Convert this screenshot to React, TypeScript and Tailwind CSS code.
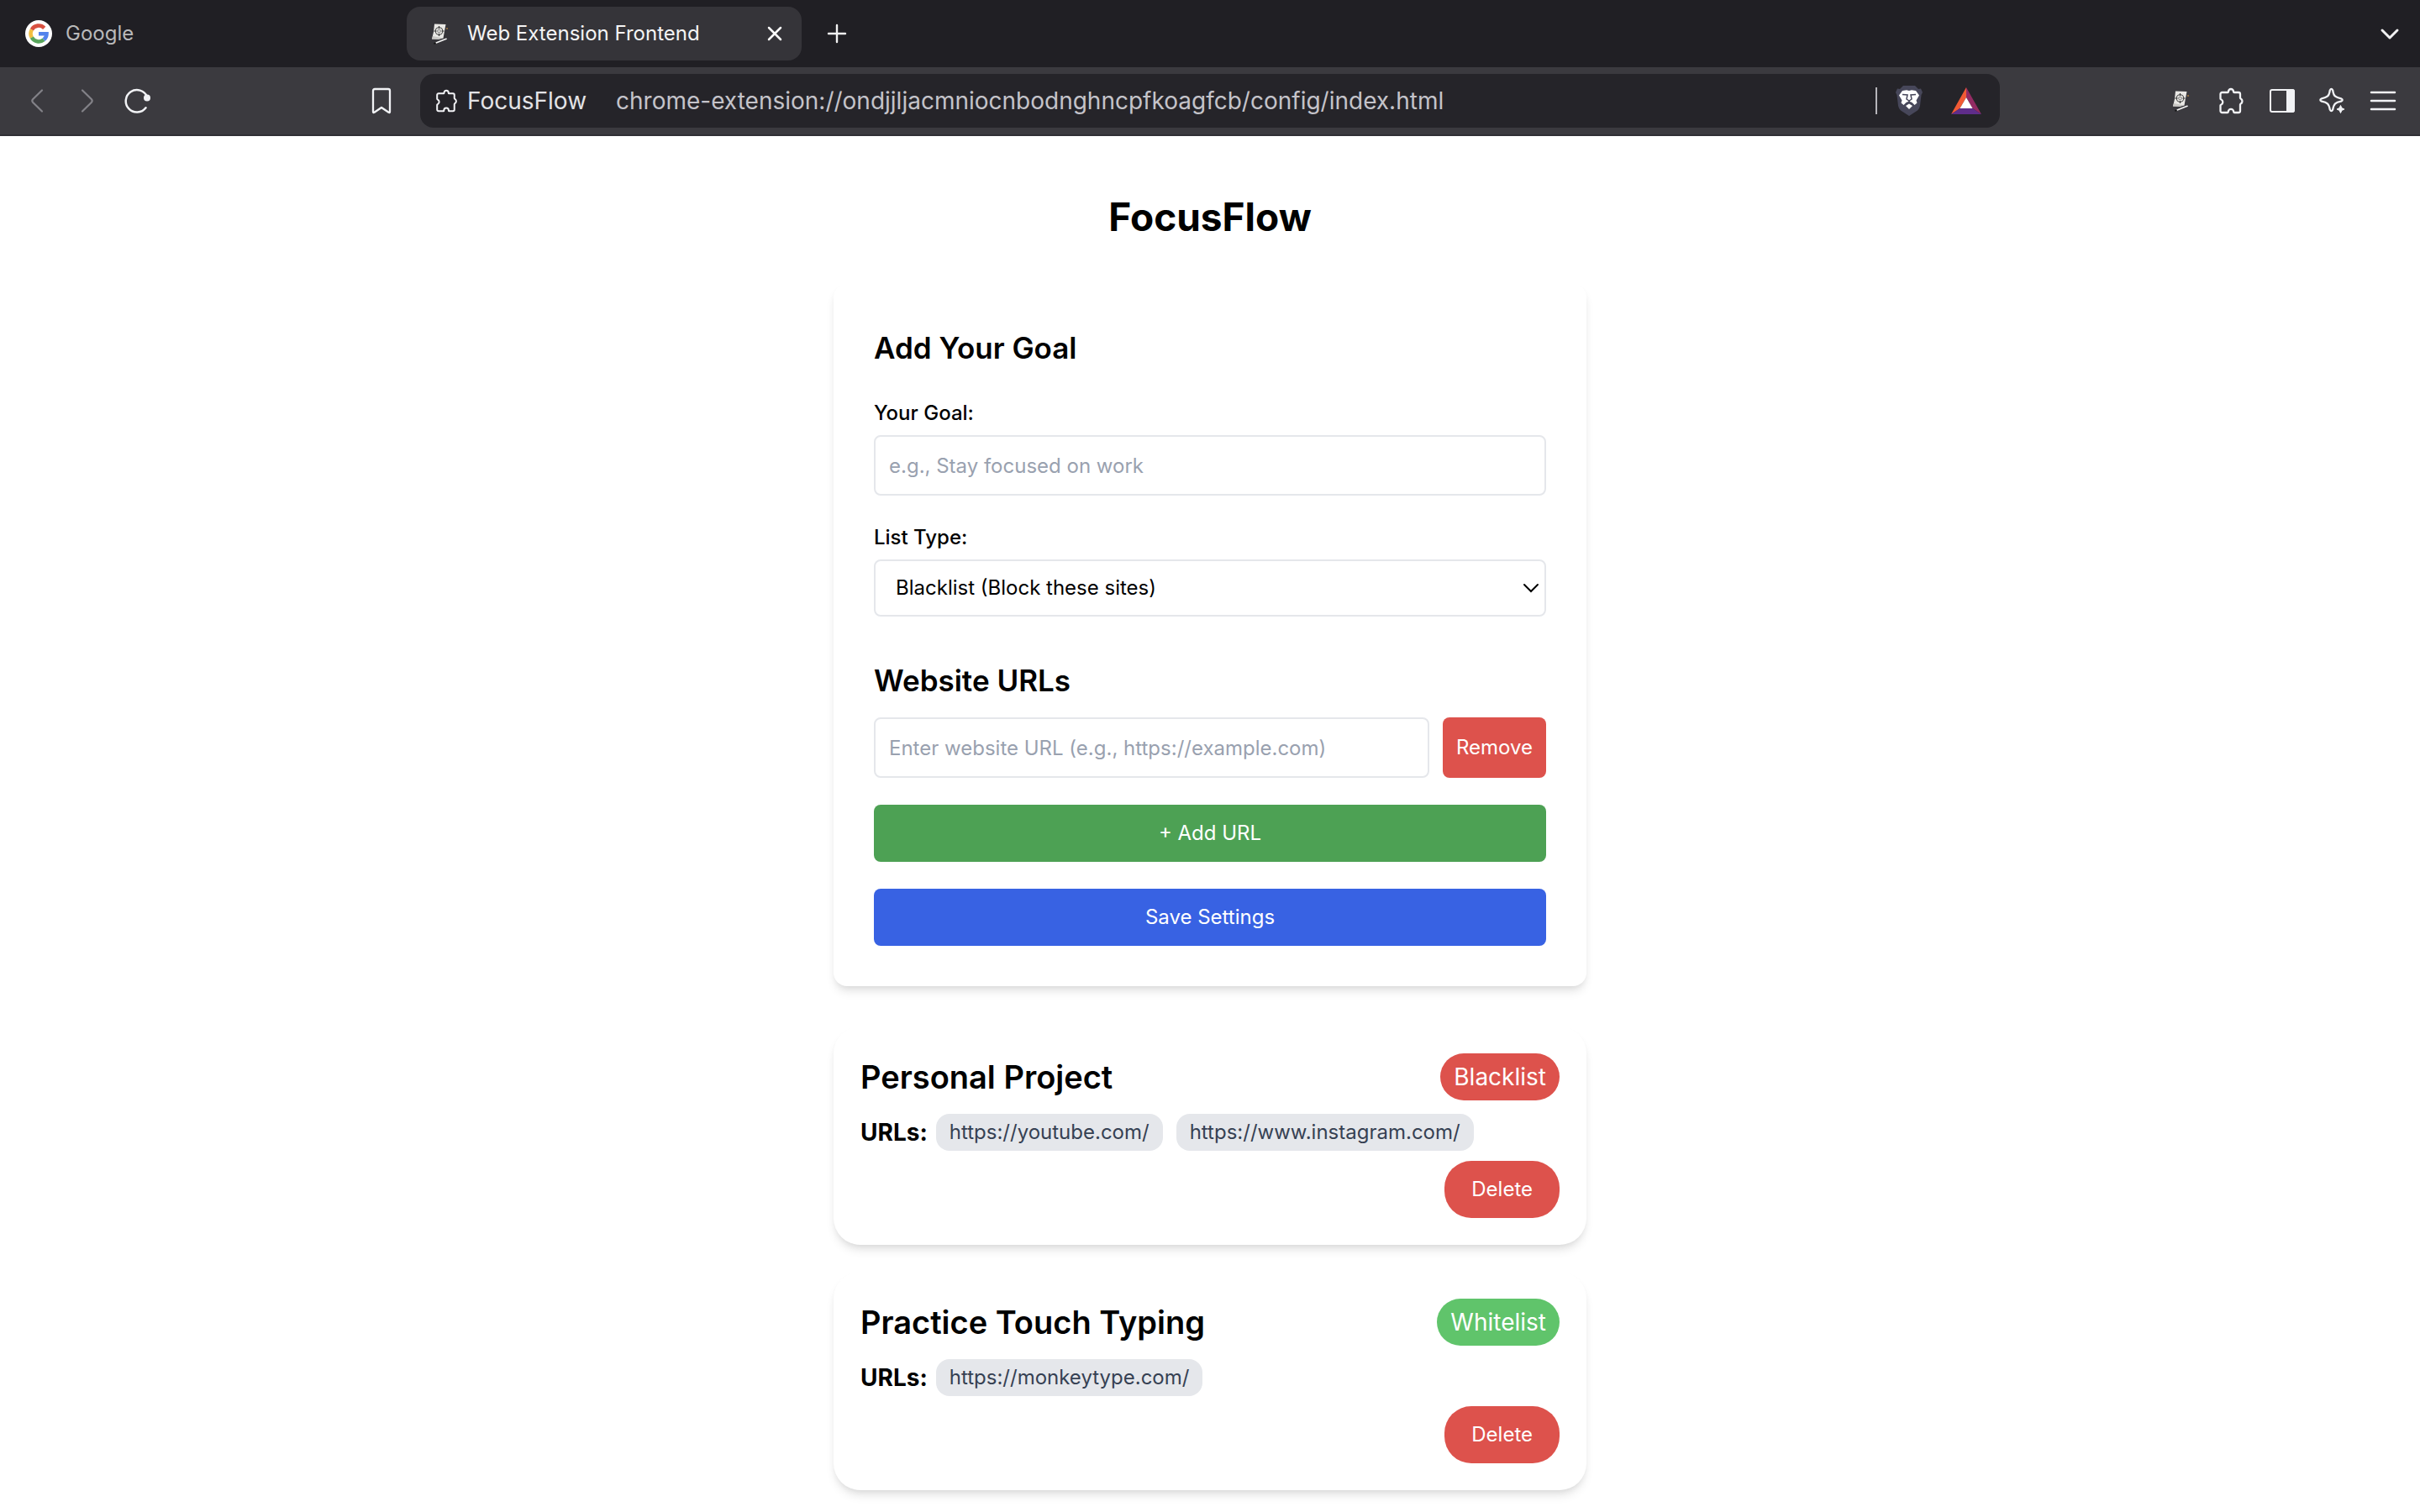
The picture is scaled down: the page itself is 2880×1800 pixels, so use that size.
import React from "react";

type Goal = { name: string; list: "Blacklist" | "Whitelist"; urls: string[] };

const goals: Goal[] = [
  { name: "Personal Project", list: "Blacklist", urls: ["https://youtube.com/", "https://www.instagram.com/"] },
  { name: "Practice Touch Typing", list: "Whitelist", urls: ["https://monkeytype.com/"] },
];

function ScrollIcon() {
  return (
    <svg width="24" height="28" viewBox="0 0 24 28" fill="none" aria-hidden="true">
      <path d="M5 2.500 18.500 3 17 11 15.500 19.500 10 20.500 2 20.500 4 12Z" fill="#e9e8e5" />
      <path d="M2 20.500 3 17 15.500 19.500 10 21Z" fill="#c9c8c5" />
      <circle cx="10.500" cy="11" r="4.300" stroke="#4a4a4a" strokeWidth="1.100" />
      <circle cx="10.500" cy="11" r="1.800" stroke="#777" strokeWidth="1" />
      <path d="M10.500 5v3M10.500 14V17M4.500 11h3M13.500 11h3" stroke="#333" strokeWidth="1.100" />
      <path d="M7 25 19 20.300" stroke="#f4f4f4" strokeWidth="1.700" strokeLinecap="round" />
      <path d="M5 25.800 6 25.400" stroke="#111" strokeWidth="1.600" strokeLinecap="round" />
      <path d="M20 7v2" stroke="#b98542" strokeWidth="1.300" />
    </svg>
  );
}

function PuzzleIcon({ size = 32 }: { size?: number }) {
  return (
    <svg width={size} height={size} viewBox="0 0 32 32" fill="none" stroke="currentColor" strokeWidth="2.300" strokeLinejoin="round" aria-hidden="true">
      <path d="M2.500 8a2 2 0 0 1 2-2h6.800c.6 0 .7-.5.700-1a3 3 0 0 1 6 0c0 .5.100 1 .7 1h5.300a2 2 0 0 1 2 2v4.500c0 .7.400.900 1 1.200a3.400 3.400 0 0 1 0 5.600c-.6.400-1 .6-1 1.200V28a2 2 0 0 1-2 2h-5c-.6 0-.8-.4-.8-1a3.200 3.200 0 0 0-6.400 0c0 .6-.2 1-.8 1H4.500a2 2 0 0 1-2-2v-6.500c0-.6.400-.8 1-1a3.400 3.400 0 0 0 0-6c-.6-.2-1-.4-1-1Z" />
    </svg>
  );
}

function BrowserChrome() {
  return (
    <header className="font-[Inter,sans-serif]">
      <div className="flex h-20 items-center bg-[#201f24]">
        <div className="flex w-[484px] items-center gap-4 pl-[30px] text-2xl text-[#b9b9ba]">
          <svg width="32" height="32" viewBox="0 0 32 32" fill="none" aria-hidden="true">
            <circle cx="16" cy="16" r="16" fill="#fff" />
            <g strokeWidth="4.600">
              <path d="M22.700 9.300A9.500 9.500 0 0 0 7.800 11.300" stroke="#d85040" />
              <path d="M7.800 11.300a9.500 9.500 0 0 0 0 9.400" stroke="#f2bf42" />
              <path d="M7.800 20.700a9.500 9.500 0 0 0 14.300 2.600" stroke="#58a55c" />
              <path d="M22.100 23.300A9.500 9.500 0 0 0 25.500 16.200H16" stroke="#5383ec" />
            </g>
          </svg>
          Google
        </div>
        <div className="flex h-16 w-[470px] items-center rounded-2xl bg-[#353439] pl-7 pr-[22px] text-2xl text-[#f4f4f5]">
          <ScrollIcon />
          <span className="flex-1 pl-5">Web Extension Frontend</span>
          <button aria-label="Close tab" className="flex">
            <svg width="20" height="20" viewBox="0 0 20 20" stroke="#fff" strokeWidth="2.500" strokeLinecap="round"><path d="m3 3 14 14M17 3 3 17" /></svg>
          </button>
        </div>
        <button aria-label="New tab" className="ml-[30px] flex">
          <svg width="24" height="24" viewBox="0 0 24 24" stroke="#f1f1f2" strokeWidth="2.400" strokeLinecap="round"><path d="M12 2v20M2 12h20" /></svg>
        </button>
        <button aria-label="Search tabs" className="ml-auto mr-6 flex">
          <svg width="24" height="24" viewBox="0 0 24 24" fill="none" stroke="#f1f1f2" strokeWidth="3" strokeLinecap="round" strokeLinejoin="round"><path d="m3 8 9 9 9-9" /></svg>
        </button>
      </div>
      <div className="flex h-[82px] items-center border-b-2 border-[#302f35] bg-[#3b3a3f] text-[#f1f2f5]">
        <div className="flex w-[500px] items-center pl-7">
          <button aria-label="Back" className="flex text-[#838288]">
            <svg width="32" height="32" viewBox="0 0 32 32" fill="none" stroke="currentColor" strokeWidth="2.200" strokeLinecap="round" strokeLinejoin="round"><path d="M22 3.500 11 14.300q-1.400 1.700 0 3.400L22 28.500" /></svg>
          </button>
          <button aria-label="Forward" className="ml-7 flex text-[#838288]">
            <svg width="32" height="32" viewBox="0 0 32 32" fill="none" stroke="currentColor" strokeWidth="2.200" strokeLinecap="round" strokeLinejoin="round"><path d="m10 3.500 11 10.800q1.400 1.700 0 3.400L10 28.500" /></svg>
          </button>
          <button aria-label="Reload" className="ml-7 flex">
            <svg width="32" height="32" viewBox="0 0 32 32" fill="none" stroke="currentColor" strokeWidth="2.500" strokeLinecap="round"><path d="M27 11A13.200 13.200 0 1 0 25.500 24.200" /><circle cx="27" cy="12.500" r="4" fill="currentColor" stroke="none" /></svg>
          </button>
          <button aria-label="Bookmark" className="ml-auto mr-[30px] flex">
            <svg width="32" height="32" viewBox="0 0 32 32" fill="none" stroke="currentColor" strokeWidth="2.300" strokeLinejoin="round"><path d="M6 4q0-2 2-2h16q2 0 2 2v25q0 1.500-1.500.8L16 24l-8.500 5.800Q6 30.500 6 29Z" /></svg>
          </button>
        </div>
        <div className="flex h-16 w-[1880px] min-w-0 items-center rounded-2xl bg-[#252429] pl-[18px] pr-[22px]">
          <PuzzleIcon size={28} />
          <span className="ml-2.5 w-[177px] text-[28px] text-[#e3e3e6]">FocusFlow</span>
          <input aria-label="Address" readOnly value="chrome-extension://ondjjljacmniocnbodnghncpfkoagfcb/config/index.html" className="min-w-0 flex-1 bg-transparent text-[28px] text-[#c4c3c9] outline-none" />
          <span className="h-8 w-0.5 bg-[#b6b5ba]" />
          <button aria-label="Brave Shields" className="ml-5 flex">
            <svg width="36" height="36" viewBox="0 0 36 36">
              <path d="M11 0h14l4 4 3-.5 2 4.500-1.500 3L31 24q-.5 3-3 5.500L18 36l-10-6.500Q5.500 27 5 24L3.500 11 2 8l2-4.500 3 .5Z" fill="#47475a" />
              <path d="m10 6 5-.8 3 .8 3-.8 5 .8 4 5.500-3.500 6 1 3-3 2.500-3-3-3.500-1.500-3.500 1.500-3 3-3-2.500 1-3L6 11.500Z" fill="#fff" />
              <path d="m14 24 4-2.500 4 2.500-4 4Z" fill="#fff" />
              <path d="m10 10.500 6 .5-1 5 3 2 3-2-1-5 6-.5M18 18v3" fill="none" stroke="#47475a" strokeWidth="1.500" />
            </svg>
          </button>
          <button aria-label="Brave Rewards" className="ml-8 flex">
            <svg width="36" height="32" viewBox="0 0 36 32">
              <path d="M18 0v12L10.500 25 0 32Z" fill="#f15a35" />
              <path d="m18 0 18 32-10.500-7L18 12Z" fill="#932b63" />
              <path d="M0 32l10.500-7h15L36 32Z" fill="#5f2d8a" />
              <path d="m18 12 7.500 13h-15Z" fill="#fff" />
            </svg>
          </button>
        </div>
        <div className="ml-auto flex items-center gap-7 pr-7">
          <button aria-label="FocusFlow extension" className="flex w-8 justify-center"><ScrollIcon /></button>
          <button aria-label="Extensions" className="flex"><PuzzleIcon /></button>
          <button aria-label="Sidebar" className="flex">
            <svg width="32" height="32" viewBox="0 0 32 32" fill="none" stroke="currentColor" strokeWidth="2"><rect x="2" y="3" width="28" height="26" rx="2" /><path d="M22 3h6q2 0 2 2v22q0 2-2 2h-6Z" fill="currentColor" /></svg>
          </button>
          <button aria-label="Leo AI" className="flex">
            <svg width="32" height="32" viewBox="0 0 32 32" fill="none" stroke="currentColor" strokeWidth="2.300" strokeLinejoin="round">
              <path d="M12.800 3.500q1.700-3.200 3.400 0 .8 5.500 3 7.200 1.700 1.500 6.800 2.600 3.400 1.700 0 3.400-5 1-6.800 2.600-2 2-3 7.200-1.700 3.200-3.400 0-1-5.200-3-7.200-1.800-1.600-6.800-2.600-3.400-1.700 0-3.400 5.100-1.100 6.800-2.600 2.200-1.700 3-7.200Z" />
              <path d="m25.500 21.500 1.400 3.100 3.100 1.400-3.100 1.400-1.400 3.100-1.400-3.100-3.100-1.400 3.100-1.400Z" fill="currentColor" strokeWidth="1" />
            </svg>
          </button>
          <button aria-label="Menu" className="flex">
            <svg width="32" height="32" viewBox="0 0 32 32" stroke="currentColor" strokeWidth="2.500" strokeLinecap="round"><path d="M2 6h28M2 16h28M2 26h28" /></svg>
          </button>
        </div>
      </div>
    </header>
  );
}

function SettingsForm() {
  return (
    <form className="rounded-2xl bg-white p-12 shadow-[0_8px_12px_-2px_rgba(0,0,0,0.1),0_4px_8px_-4px_rgba(0,0,0,0.1)]" onSubmit={(e) => e.preventDefault()}>
      <h2 className="mb-8 text-[35px]/[56px] font-semibold">Add Your Goal</h2>
      <label htmlFor="goal" className="mb-2 block text-2xl/[36px] font-medium">Your Goal:</label>
      <input id="goal" placeholder="e.g., Stay focused on work" className="mb-8 block h-[72px] w-full rounded-lg border-2 border-gray-200 px-4 text-2xl placeholder:text-gray-400" />
      <label htmlFor="list-type" className="mb-2 block text-2xl/[36px] font-medium">List Type:</label>
      <div className="relative">
        <select id="list-type" className="block h-[68px] w-full appearance-none rounded-lg border-2 border-gray-200 bg-white px-6 text-2xl">
          <option>Blacklist (Block these sites)</option>
          <option>Whitelist (Allow only these sites)</option>
        </select>
        <svg className="pointer-events-none absolute right-2 top-6" width="20" height="20" viewBox="0 0 20 20" fill="none" stroke="#000" strokeWidth="2" strokeLinecap="round"><path d="m2 6 8 8 8-8" /></svg>
      </div>
      <h3 className="mb-4 mt-12 text-[35px]/[56px] font-semibold">Website URLs</h3>
      <div className="mb-8 flex gap-4">
        <input aria-label="Website URL" placeholder="Enter website URL (e.g., https://example.com)" className="h-[72px] min-w-0 flex-1 rounded-lg border-2 border-gray-200 px-4 text-2xl placeholder:text-gray-400" />
        <button type="button" className="rounded-lg bg-[#dd524c] px-4 text-2xl text-white">Remove</button>
      </div>
      <button type="button" className="mb-8 block h-[68px] w-full rounded-lg bg-[#4da154] text-2xl text-white">+ Add URL</button>
      <button type="submit" className="block h-[68px] w-full rounded-lg bg-[#3862e3] text-2xl text-white">Save Settings</button>
    </form>
  );
}

function GoalCard({ goal }: { goal: Goal }) {
  return (
    <section className="rounded-[32px] bg-white p-8 shadow-[0_8px_12px_-2px_rgba(0,0,0,0.1),0_4px_8px_-4px_rgba(0,0,0,0.1)]">
      <div className="flex items-center justify-between">
        <h2 className="text-[38px]/[56px] font-semibold">{goal.name}</h2>
        <span className={goal.list === "Blacklist" ? "rounded-[28px] bg-[#dd524c] px-4 text-[28px]/[56px] text-white" : "rounded-[28px] bg-[#60c46b] px-4 text-[28px]/[56px] text-white"}>{goal.list}</span>
      </div>
      <div className="mt-4 flex items-center">
        <span className="mr-2.5 text-[28px]/[40px] font-bold">URLs:</span>
        <ul className="flex gap-4">
          {goal.urls.map((url) => (
            <li key={url} className="rounded-2xl bg-gray-200 px-4 text-2xl/[44px] text-gray-700">{url}</li>
          ))}
        </ul>
      </div>
      <div className="mt-3 flex justify-end">
        <button className="h-[68px] rounded-[32px] bg-[#dd524c] px-8 text-2xl text-white">Delete</button>
      </div>
    </section>
  );
}

export default function App() {
  return (
    <div className="min-h-screen bg-white font-[Inter,sans-serif] text-black">
      <BrowserChrome />
      <main className="mx-auto w-full max-w-[896px] pb-[26px] pt-16">
        <h1 className="mb-12 text-center text-[46px]/[64px] font-bold">FocusFlow</h1>
        <SettingsForm />
        <div className="mt-12 flex flex-col gap-8">
          {goals.map((g) => <GoalCard key={g.name} goal={g} />)}
        </div>
      </main>
    </div>
  );
}
